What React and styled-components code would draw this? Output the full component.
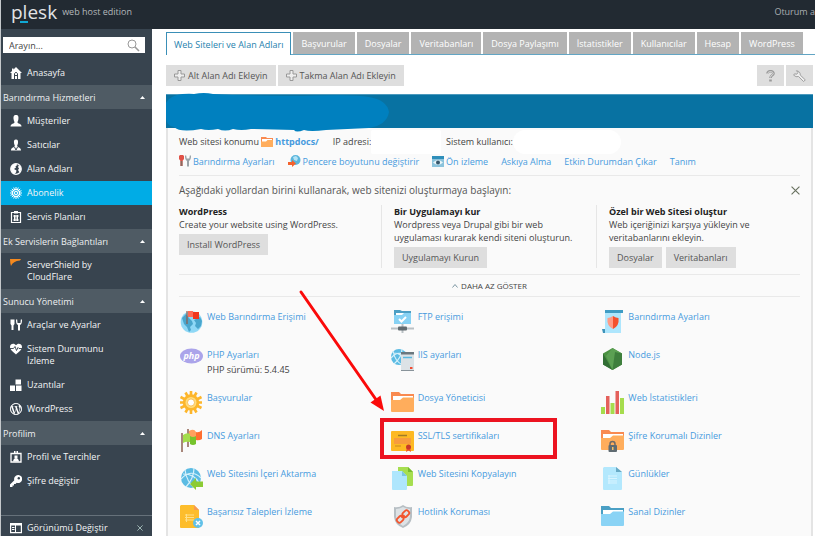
import React from 'react';
import styled, { createGlobalStyle } from 'styled-components';
import { FaWordpressSimple } from 'react-icons/fa';

const GlobalStyle = createGlobalStyle`
  *, *::before, *::after { box-sizing: border-box; }
  body { margin: 0; background: #fff; }
  body, button, input { font-family: "Open Sans", "Noto Sans", sans-serif; font-size: 9px; }
  ul, h1, h2, h3, p { margin: 0; padding: 0; list-style: none; font-weight: 400; }
  button { border: 0; cursor: pointer; }
  svg { display: block; flex: none; }
`;

/* ---------- layout ---------- */
const Page = styled.div`
  min-height: calc(100vh - 2px);
  display: flex;
  flex-direction: column;
  border-left: 1px solid #c4c8cb;
  overflow: hidden;
`;
const Header = styled.header`
  height: 29px;
  background: #222a32;
  display: flex;
  align-items: center;
  justify-content: space-between;
  padding: 0 0 6px 10px;
  color: #a9adb1;
  white-space: nowrap;
`;
const Brand = styled.div`
  display: flex;
  align-items: center;
  gap: 5px;
  color: #b4b8bb;
  font-size: 9px;
`;
const Logo = styled.span`
  position: relative;
  font-size: 19px;
  line-height: 22px;
  color: #e2e4e6;
  &::after {
    content: '';
    position: absolute;
    left: 9px;
    bottom: 0;
    width: 8px;
    height: 2px;
    background: #10a8d4;
  }
`;
const Columns = styled.div`
  flex: 1;
  display: flex;
`;
const Sidebar = styled.aside`
  width: 151px;
  flex: none;
  background: #38444f;
  display: flex;
  flex-direction: column;
  color: #f1f3f4;
`;
const Main = styled.main`
  flex: 1;
  min-width: 0;
  display: flex;
  flex-direction: column;
  padding: 3px 2px 0 14px;
`;

/* ---------- sidebar ---------- */
const Search = styled.label`
  margin: 8px 7px 8px 2px;
  height: 16px;
  background: #fff;
  display: flex;
  align-items: center;
  padding: 0 5px 0 6px;
  input {
    flex: 1;
    min-width: 0;
    border: 0;
    outline: 0;
    padding: 0;
    background: none;
    color: #333;
  }
  input::placeholder { color: #444; opacity: 1; }
`;
const GroupHead = styled.button`
  width: 100%;
  height: 24px;
  display: flex;
  align-items: center;
  justify-content: space-between;
  padding: 0 7px 0 2px;
  background: #4f5b64;
  color: #eef0f1;
`;
const NavLink = styled.a`
  display: flex;
  gap: 5px;
  padding: 6px 24px 6px 9px;
  line-height: 12px;
  text-decoration: none;
  color: #f4f5f6;
  background: ${(p) => (p.$active ? '#00ace6' : 'transparent')};
`;
const ViewSwitch = styled.div`
  margin-top: auto;
  height: 21px;
  border-top: 1px solid #66717a;
  display: flex;
  align-items: center;
  justify-content: space-between;
  padding: 3px 9px 0 9px;
  button {
    display: flex;
    align-items: center;
    gap: 5px;
    padding: 0;
    background: none;
    color: #f4f5f6;
  }
`;

/* ---------- main ---------- */
const Tabs = styled.div`
  display: flex;
  gap: 2px;
  border-bottom: 1px solid #62a5c4;
  margin-right: -2px;
`;
const Tab = styled.button`
  height: ${(p) => (p.$active ? 23 : 22)}px;
  margin-bottom: ${(p) => (p.$active ? -1 : 0)}px;
  padding: 0 ${(p) => (p.$active ? 7 : 8)}px;
  white-space: nowrap;
  color: ${(p) => (p.$active ? '#2681ad' : '#fff')};
  background: ${(p) => (p.$active ? '#fff' : '#b3b3b3')};
  border: ${(p) => (p.$active ? '1px solid #3a8fb7' : '0')};
  border-bottom: 0;
`;
const Toolbar = styled.div`
  display: flex;
  gap: 2px;
  margin: 10px 0 8px;
`;
const Spacer = styled.span`
  flex: 1;
`;
const Button = styled.button`
  height: 21px;
  padding: 0 8px;
  display: flex;
  align-items: center;
  gap: 3px;
  background: #dedede;
  color: #555;
  white-space: nowrap;
`;
const ToolIconButton = styled(Button)`
  width: 27px;
  padding: 0;
  justify-content: center;
`;
const Panel = styled.section`
  flex: 1;
  display: flex;
  flex-direction: column;
`;
const PanelHead = styled.div`
  position: relative;
  height: 34px;
  background: #0872a2;
  border-top: 1px solid #4b99bd;
  svg {
    position: absolute;
    left: 0;
    top: -2px;
  }
`;
const PanelBody = styled.div`
  flex: 1;
  background: #fafafa;
  border: 1px solid #e4e4e4;
  border-width: 0 2px;
  padding: 0 11px 4px;
`;
const InfoRow = styled.div`
  height: 27px;
  display: flex;
  align-items: center;
  white-space: nowrap;
  color: #444;
`;
const Redacted = styled.span`
  height: 24px;
  width: ${(p) => p.$width}px;
  border-radius: ${(p) => p.$radius}px;
  background: #fff;
`;
const Link = styled.a`
  display: flex;
  align-items: center;
  gap: 2px;
  color: #479ade;
  text-decoration: none;
  font-weight: ${(p) => (p.$bold ? 700 : 400)};
`;
const LinkRow = styled.div`
  height: 20px;
  padding-bottom: 8px;
  display: flex;
  align-items: center;
  gap: 13px;
  white-space: nowrap;
`;
const Builder = styled.div`
  border-top: 1px solid #e9e9e9;
  border-bottom: 1px solid #e9e9e9;
  padding: 6px 0;
`;
const BuilderHead = styled.div`
  display: flex;
  justify-content: space-between;
  align-items: center;
  height: 16px;
  h2 { font-size: 10px; color: #555; }
  button { padding: 0; background: none; }
`;
const Cards = styled.div`
  display: grid;
  grid-template-columns: repeat(3, 1fr);
  gap: 24px;
  margin-top: 7px;
`;
const Card = styled.div`
  line-height: 13px;
  color: #444;
  & + & {
    margin-left: -13px;
    padding-left: 12px;
    border-left: 1px solid #e6e6e6;
  }
  h3 { font-size: 9px; font-weight: 700; color: #222; line-height: 13px; }
  p { white-space: pre-line; }
`;
const Actions = styled.div`
  display: flex;
  gap: 4px;
  margin-top: 3px;
`;
const ShowLess = styled.button`
  width: 100%;
  height: 22px;
  display: flex;
  align-items: center;
  justify-content: center;
  gap: 3px;
  background: none;
  border-bottom: 1px solid #e9e9e9;
  color: #444;
  font-size: 8px;
`;
const Services = styled.ul`
  display: grid;
  grid-template-columns: repeat(3, 1fr);
  gap: 14px 12px;
  padding: 13px 0 0 1px;
`;
const Service = styled.li`
  position: relative;
  display: flex;
  gap: 4px;
  min-height: 24px;
  line-height: 14px;
  color: #444;
  white-space: nowrap;
  p { margin-top: 1px; }
`;
const Highlight = styled.span`
  position: absolute;
  left: -11px;
  top: -11px;
  width: 177px;
  height: 41px;
  border: 4px solid #ec1320;
`;
const Arrow = styled.svg`
  position: absolute;
  left: -94px;
  top: -140px;
  pointer-events: none;
`;

/* ---------- sidebar icons ---------- */
const Glyph = ({ children }) => (
  <svg width="12" height="12" viewBox="0 0 12 12" fill="#fff">{children}</svg>
);
const glyphs = {
  home: (
    <Glyph>
      <path d="M6 0 12 6h-1.500v6H1.500V6H0L2 4V1.500h1.500v1z" />
      <path d="M4.500 12V6.500Q6 4 7.500 6.500V12M5 8.500h2" fill="none" stroke="#38444f" />
    </Glyph>
  ),
  user: <Glyph><path d="M6 0C3.500 0 3.300 2 3.600 4.200 3.900 6 4.500 6.500 4.500 7.500 4.500 8.600.5 8.500.5 11.500h11c0-3-4-2.900-4-4 0-1 .6-1.500.9-3.300C8.700 2 8.500 0 6 0z" /></Glyph>,
  reseller: (
    <Glyph>
      <path d="M6 .5C4 .5 3.800 2 4 4c.2 1.500.8 2 .8 3C4.800 8.500 1 8 1 11.500h10C11 8 7.200 8.500 7.200 7c0-1 .6-1.500.8-3 .2-2 0-3.500-2-3.500z" />
      <path d="m4.500 8 1.500 3 1.500-3" fill="none" stroke="#38444f" />
    </Glyph>
  ),
  globe: (
    <Glyph>
      <circle cx="6" cy="6" r="5.300" fill="none" stroke="#fff" strokeWidth="1.200" />
      <path d="M1 6C.8 3 3 .6 6 .8L7.500 2 5.500 3.200 6 4.500 4 6l2.500 1.500L6 9.500 4.500 11C2 10.500 1 8 1 6zM9 2l2 2.500V7L9.500 9.500 8 7l1-1.500L8 4z" />
    </Glyph>
  ),
  gear: (
    <Glyph>
      <path d="M6 0v12M0 6h12M1.800 1.800l8.400 8.400M10.200 1.800l-8.400 8.400M3.700.5l4.600 11M8.300.5l-4.600 11M.5 3.700l11 4.600M.5 8.300l11-4.600" stroke="#fff" strokeWidth="1" />
      <circle cx="6" cy="6" r="4" />
      <circle cx="6" cy="6" r="2.600" fill="none" stroke="#00ace6" strokeWidth=".8" />
      <circle cx="6" cy="6" r="1" fill="#00ace6" />
    </Glyph>
  ),
  plans: (
    <Glyph>
      <path d="M1.500 1.500h9v10h-9z" fill="none" stroke="#fff" strokeWidth="1.200" />
      <path d="M4 0h4v2.500H4zM4 4h1.500v6H4zM6.500 4H8v6H6.500zM3.200 4.500h5.600v1H3.200zM3.200 8.500h5.600v1H3.200z" />
    </Glyph>
  ),
  shield: <Glyph><path d="M0 0h11L10 1.500Q3 2 1 7Q0 4 0 0z" fill="#f58a1f" /></Glyph>,
  tools: <Glyph><path d="M.5.5h4v4.500L3.500 6.500V11h-2V6.500L.5 5zM6 .5c0 3 .2 4.500 2 5.500v5.500h2V6c1.800-1 2-2.500 2-5.500h-1.200L10.500 4h-3L7.200.5z" /></Glyph>,
  heart: (
    <Glyph>
      <path d="M6 2.300C7.500-.3 12 .3 12 4c0 3-3.500 5-6 7.500C3.500 9 0 7 0 4 0 .3 4.500-.3 6 2.300z" />
      <path d="M0 5.500h3.500L5 3.500l1.500 4 1.500-3 1 1h3" fill="none" stroke="#38444f" strokeWidth=".9" />
    </Glyph>
  ),
  blocks: <Glyph><path d="M0 6.500h5V12H0zM6 6.500h5.500V12H6zM5.500.5H11V5.500H5.500z" /></Glyph>,
  wordpress: (
    <Glyph>
      <circle cx="6" cy="6" r="5.500" fill="none" stroke="#fff" strokeWidth=".8" />
      <FaWordpressSimple size={12} color="#fff" />
    </Glyph>
  ),
  profile: (
    <Glyph>
      <path d="M1 2.500h10v8.500H1z" fill="none" stroke="#fff" strokeWidth="1.300" />
      <path d="M4 0h1.500v3H4zM6.500 0H8v3H6.500zM4.500 4.500h3V7h-3zM3 10.500Q3.500 7 6 7t3 3.500z" />
    </Glyph>
  ),
  key: (
    <Glyph>
      <path d="M8 0a4 4 0 1 1-1.300 7.700L5.500 9H4v1.500H2.500V12H0V9.500l4.300-4.300A4 4 0 0 1 8 0z" />
      <circle cx="8.800" cy="3.200" r="1.200" fill="#38444f" />
    </Glyph>
  ),
  view: (
    <Glyph>
      <path d="M.6 1.600h10.800v9H.6z" fill="none" stroke="#fff" strokeWidth="1.200" />
      <path d="M.5 1.500h11v2H.5zM2 5h2.500v1H2zM2 7h2.500v1H2zM5 3h1v7H5z" />
    </Glyph>
  ),
};

/* ---------- service icons ---------- */
const Pic = ({ children, size = 23 }) => (
  <svg width={size} height={size} viewBox="0 0 23 23">{children}</svg>
);
const Web = ({ r = 10, cx = 11, cy = 11 }) => (
  <g fill="none" stroke="#d6f1fb" strokeWidth="1.200">
    <circle cx={cx} cy={cy} r={r} fill="#5bbbe3" stroke="none" />
    <path d={`M${cx - r} ${cy + 1}Q${cx} ${cy - r} ${cx + r} ${cy}M${cx - 6} ${cy - r + 2}Q${cx - 4} ${cy + 5} ${cx + 4} ${cy + r}M${cx + 3} ${cy - r}Q${cx + 3} ${cy} ${cx - 5} ${cy + r - 1}M${cx - r + 2} ${cy - 4}Q${cx + 4} ${cy - 4} ${cx + r - 2} ${cy + 5}`} />
  </g>
);
const Folder = ({ back, front, children }) => (
  <Pic>
    <path d="M0 1h8l2 2h13v10H0z" fill={back} />
    <path d="M2 5h20v6H2z" fill="#fff" />
    <path d="M0 9h9l3-2.500h11V20q0 1-1 1H1q-1 0-1-1z" fill={front} />
    {children}
  </Pic>
);
const pics = {
  access: (
    <Pic>
      <circle cx="11.500" cy="12" r="10.800" fill="#8fd8f6" />
      <path d="M2 8 6 4l3 4 3 3 1 3-3 3 1 3-2 2-2-5-3-3zM14 10l6-3 2 4-1 5-3 3-3-3 1-3z" fill="#4aa6cd" />
      <path d="M7 1v13" stroke="#8d5d4c" strokeWidth="1.200" />
      <path d="M8 1h5v6H8z" fill="#ff6b57" />
      <path d="M13 2h6v7h-6z" fill="#f0371d" />
    </Pic>
  ),
  php: (
    <Pic>
      <ellipse cx="11.500" cy="8" rx="11.500" ry="7.500" fill="#aba4ea" />
      <text x="11.500" y="11" fontSize="9" fontWeight="700" fontStyle="italic" textAnchor="middle" fill="#fff">php</text>
    </Pic>
  ),
  cog: (
    <Pic>
      <path d="M11 0v23M.5 6l21 11M.5 17l21-11M5.500 1.500l11 20M16.500 1.500l-11 20M0 11.500h22" stroke="#fdb62b" strokeWidth="2.600" />
      <circle cx="11" cy="11.500" r="8.300" fill="#fdb62b" />
      <circle cx="11" cy="11.500" r="5.500" fill="#ffdc7e" />
      <circle cx="11" cy="11.500" r="3.500" fill="#fff" stroke="#f5a51e" strokeWidth=".6" />
    </Pic>
  ),
  flags: (
    <Pic>
      <path d="M2 4v19M8 0v18" stroke="#8d6252" strokeWidth="1.500" />
      <path d="M9 2q5-3 7 1v7H9z" fill="#ffa05e" />
      <path d="M16 3q3 1 6-2v9q-3 2-6 1z" fill="#ff6e30" />
      <path d="M3 6q4-3 7-1v8q-4-1-7 1z" fill="#a4dd4b" />
      <path d="M10 7q3 2 6 0v8q-3 2-6 0z" fill="#76c32c" />
    </Pic>
  ),
  importSite: (
    <Pic>
      <Web />
      <path d="m10 17 6-6v3.500h7V20h-7v3z" fill="#8ccb35" />
    </Pic>
  ),
  failed: (
    <Pic>
      <path d="M1 0h13l5 5v18H1Q0 23 0 22V1z" fill="#fdbd2c" />
      <path d="M14 0v5h5z" fill="#f79a54" />
      <path d="M5 10h9M5 12.500h9M5 15h9M6.500 9v8" stroke="#ffe08a" />
      <circle cx="18" cy="18" r="5" fill="#62c1e8" />
      <path d="m16 16 4 4m0-4-4 4" stroke="#fff" strokeWidth="1.500" />
    </Pic>
  ),
  ftp: (
    <Pic>
      <path d="M3 0h6l2 1h9v4H3z" fill="#4d9fc4" />
      <path d="M5 3h14v4H5z" fill="#fff" />
      <path d="M3 5h8l2-2h7v11H3z" fill="#88d2f4" />
      <path d="m8 9 2.500 2.500L15 7" stroke="#fff" strokeWidth="2" fill="none" />
      <path d="M0 18.500h23M11.500 14v9" stroke="#b9c0c4" strokeWidth="2" />
      <rect x="7" y="16.500" width="9" height="4" rx="1" fill="#616b70" />
    </Pic>
  ),
  iis: (
    <Pic>
      <Web cx={8} cy={9} r={8} />
      <path d="M10 4h13v19H10z" fill="#dce2e6" />
      <path d="M10 4h13v2.500H10z" fill="#6b777e" />
      <path d="M12 9.500h9" stroke="#5ab8e0" strokeWidth="1.500" />
      <path d="M10 22.500h13" stroke="#88939a" />
      <path d="M19 19h2.500v2H19z" fill="#f04c32" />
    </Pic>
  ),
  folder: <Folder back="#f98a50" front="#ffad5c" />,
  cert: (
    <Pic>
      <rect y="2" width="23" height="20" rx="1" fill="#fdb924" />
      <path d="M7 6.500h9" stroke="#a17c27" strokeWidth="1.500" />
      <path d="M3 9h17v6H3z" fill="#f79c3e" />
      <path d="M4 17h6" stroke="#c78a20" />
      <path d="m16 18-1 5 2.500-1.500L20 23l-1-5z" fill="#f0542c" />
      <circle cx="17.500" cy="18" r="2.500" fill="#c8382a" />
    </Pic>
  ),
  copy: (
    <Pic>
      <path d="M7 0h10l5 5v13q0 1-1 1H7z" fill="#a6de50" />
      <path d="M17 0v5h5z" fill="#76bb30" />
      <path d="M1 4h10l5 5v13q0 1-1 1H2q-1 0-1-1z" fill="#aee6fd" />
      <path d="M11 4v5h5z" fill="#7cc5e2" />
    </Pic>
  ),
  hotlink: (
    <Pic>
      <path d="M12 0q4 3 9 2v10q-1 8-9 11-8-3-9-11V2q5 1 9-2z" fill="#b7bfc4" />
      <path d="M12 2q4 2 7 2v8q-1 6-7 9-6-3-7-9V4q3 0 7-2z" fill="#dde2e5" />
      <g fill="none" stroke="#f2562f" strokeWidth="1.800" transform="rotate(-45 12 11.500)">
        <rect x="4.500" y="9" width="7" height="5" rx="2" />
        <rect x="12.500" y="9" width="7" height="5" rx="2" />
        <path d="M10 11.500h4" />
      </g>
    </Pic>
  ),
  hosting: (
    <Pic>
      <path d="M4 3h16v20H2v-4h2z" fill="#aee6fd" />
      <path d="M4 0h18v3H4z" fill="#3f9cc4" />
      <path d="M1 19h3v4H2z" fill="#3d93b9" />
      <path d="M12 6q3 2 5.500 2 1 8-5.500 11z" fill="#f4502d" />
      <path d="M12 6Q9 8 6.500 8q-1 8 5.500 11z" fill="#ff9a86" />
    </Pic>
  ),
  node: (
    <Pic>
      <path d="m11.500 0 9.500 5.500v11L11.500 22 2 16.500v-11z" fill="#4b9142" />
      <path d="m2 5.500 9.500 16.500L2 16.500z" fill="#326e35" />
      <path d="M11.500 0 21 5.500 11.500 22 5 8z" fill="#5ba053" />
      <path d="m14 4 7 1.500v11L11.500 22z" fill="#3e7f3d" />
    </Pic>
  ),
  stats: (
    <Pic>
      <path d="M0 16h4v7H0zM9.500 12h4v11h-4zM19 7h4v16h-4z" fill="#a6dc4d" />
      <path d="M5 5h3.500v18H5zM14.500 0H18v23h-3.500z" fill="#e4605b" />
    </Pic>
  ),
  locked: (
    <Folder back="#f98a50" front="#ffad5c">
      <path d="M9 17v-2q0-2.500 2.500-2.500T14 15v2" fill="none" stroke="#6f6a66" strokeWidth="1.500" />
      <rect x="7.500" y="16" width="8.500" height="7" rx="1" fill="#5f6b72" />
      <path d="M11 18h1.500v3H11z" fill="#f5c066" />
    </Folder>
  ),
  logs: (
    <Pic>
      <path d="M3 0h12l6 5v17q0 1-1 1H3q-1 0-1-1V1z" fill="#b3e8fd" />
      <path d="M15 0v5h6z" fill="#68a9c4" />
      <path d="M7 9h9M7 11.500h9M7 14h9M7 16h9M8 8v9" stroke="#d8f4ff" />
    </Pic>
  ),
  blueFolder: <Folder back="#4a9fc4" front="#8ad3f5" />,
};

/* ---------- small icons ---------- */
const SearchIcon = () => (
  <svg width="13" height="13" viewBox="0 0 13 13" fill="none" stroke="#999">
    <circle cx="5" cy="5" r="4" />
    <path d="m8 8 4 4" strokeWidth="1.600" />
  </svg>
);
const PlusIcon = () => (
  <svg width="11" height="11" viewBox="0 0 11 11" fill="#eee" stroke="#999">
    <path d="M4 .5h3V4h3.500v3H7v3.500H4V7H.5V4H4z" />
  </svg>
);
const UpIcon = () => (
  <svg width="5" height="3" viewBox="0 0 5 3"><path d="M0 3 2.500 0 5 3z" fill="#fff" /></svg>
);
const Cross = ({ size, color }) => (
  <svg width={size} height={size} viewBox="0 0 8 8" stroke={color}><path d="m.5.500 7 7m0-7-7 7" /></svg>
);

const groups = [
  { items: [['home', 'Anasayfa']] },
  {
    title: 'Barındırma Hizmetleri',
    items: [['user', 'Müşteriler'], ['reseller', 'Satıcılar'], ['globe', 'Alan Adları'], ['gear', 'Abonelik'], ['plans', 'Servis Planları']],
  },
  { title: 'Ek Servislerin Bağlantıları', items: [['shield', 'ServerShield by CloudFlare']] },
  {
    title: 'Sunucu Yönetimi',
    items: [['tools', 'Araçlar ve Ayarlar'], ['heart', 'Sistem Durumunu İzleme'], ['blocks', 'Uzantılar'], ['wordpress', 'WordPress']],
  },
  { title: 'Profilim', items: [['profile', 'Profil ve Tercihler'], ['key', 'Şifre değiştir']] },
];
const tabs = ['Web Siteleri ve Alan Adları', 'Başvurular', 'Dosyalar', 'Veritabanları', 'Dosya Paylaşımı', 'İstatistikler', 'Kullanıcılar', 'Hesap', 'WordPress'];
const services = [
  ['access', 'Web Barındırma Erişimi'], ['ftp', 'FTP erişimi'], ['hosting', 'Barındırma Ayarları'],
  ['php', 'PHP Ayarları', 'PHP sürümü: 5.4.45'], ['iis', 'IIS ayarları'], ['node', 'Node.js'],
  ['cog', 'Başvurular'], ['folder', 'Dosya Yöneticisi'], ['stats', 'Web İstatistikleri'],
  ['flags', 'DNS Ayarları'], ['cert', 'SSL/TLS sertifikaları'], ['locked', 'Şifre Korumalı Dizinler'],
  ['importSite', 'Web Sitesini İçeri Aktarma'], ['copy', 'Web Sitesini Kopyalayın'], ['logs', 'Günlükler'],
  ['failed', 'Başarısız Talepleri İzleme'], ['hotlink', 'Hotlink Koruması'], ['blueFolder', 'Sanal Dizinler'],
];

export default function App() {
  return (
    <Page>
      <GlobalStyle />
      <Header>
        <Brand><Logo>plesk</Logo>web host edition</Brand>
        <span>Oturum a</span>
      </Header>
      <Columns>
        <Sidebar>
          <Search>
            <input type="text" placeholder="Arayın..." aria-label="Arayın" />
            <SearchIcon />
          </Search>
          <nav>
            {groups.map((g, i) => (
              <div key={i}>
                {g.title && <GroupHead>{g.title}<UpIcon /></GroupHead>}
                <ul>
                  {g.items.map(([icon, label]) => (
                    <li key={label}>
                      <NavLink href="#" $active={label === 'Abonelik'}>{glyphs[icon]}<span>{label}</span></NavLink>
                    </li>
                  ))}
                </ul>
              </div>
            ))}
          </nav>
          <ViewSwitch>
            <button>{glyphs.view}Görünümü Değiştir</button>
            <button aria-label="Kapat"><Cross size={6} color="#bcd8d2" /></button>
          </ViewSwitch>
        </Sidebar>

        <Main>
          <Tabs role="tablist">
            {tabs.map((t, i) => <Tab key={t} role="tab" aria-selected={i === 0} $active={i === 0}>{t}</Tab>)}
          </Tabs>
          <Toolbar>
            <Button><PlusIcon />Alt Alan Adı Ekleyin</Button>
            <Button><PlusIcon />Takma Alan Adı Ekleyin</Button>
            <Spacer />
            <ToolIconButton aria-label="Yardım">
              <svg width="9" height="12" viewBox="0 0 9 12" fill="none">
                <path d="M1.500 3.500C1.500.5 7.500.5 7.500 3.500 7.500 5.500 4.500 5 4.500 8M4.500 9.500v2" stroke="#999" strokeWidth="2.600" />
                <path d="M1.800 3.500C2 1 7 1 7.200 3.500 7.200 5.300 4.500 5 4.500 7.500" stroke="#e5e5e5" strokeWidth=".9" />
              </svg>
            </ToolIconButton>
            <ToolIconButton aria-label="Ayarlar">
              <svg width="13" height="12" viewBox="0 0 13 12" fill="#eee" stroke="#999" strokeWidth=".9">
                <path d="M3.500.700 5 2.500 3.800 4.200 1.500 3.800.7 5.200Q3 7.500 5.500 6.500l5 5 1.800-1.600L7.200 5Q7.500 1.500 3.500.700z" />
              </svg>
            </ToolIconButton>
          </Toolbar>

          <Panel>
            <PanelHead>
              <svg width="228" height="39" viewBox="0 0 228 39" fill="#0080bf">
                <path d="M3 6Q10 0 28 1q10-2 19 0 30 2 90 2 50-2 66 1 18 3 20 15-2 13-20 16l-43 2q-16 2-22 0-8 3-10 0l-43-1q-10 2-18 0-8 3-15 0-10 2-17 0Q14 40 8 34q-8-1-8-10V10z" />
              </svg>
            </PanelHead>
            <PanelBody>
              <InfoRow>
                <span>Web sitesi konumu&nbsp;</span>
                <Link href="#" $bold>
                  <svg width="12" height="10" viewBox="0 0 12 10">
                    <path d="M0 0h5l1 1h6v9H0z" fill="#f98a50" />
                    <path d="M1 2h10v3H1z" fill="#fff" />
                    <path d="M0 4.500h5L6.500 3H12v7H0z" fill="#ffad5c" />
                  </svg>
                  httpdocs/
                </Link>
                <span>&nbsp;&nbsp;&nbsp;&nbsp;&nbsp;&nbsp;IP adresi:</span>
                <Redacted $width={70} $radius={2} />
                <span>&nbsp;&nbsp;Sistem kullanıcı:</span>
                <Redacted $width={108} $radius={12} />
              </InfoRow>
              <LinkRow>
                <Link href="#">
                  <svg width="12" height="12" viewBox="0 0 12 12">
                    <path d="M1 0h3l1 1v3L3.500 6v5h-2V6L0 4V1z" fill="#e05248" />
                    <path d="M1.500 6h2v5h-2z" fill="#8b6a60" />
                    <path d="M6 .5c0 3 .2 4 2 5.500v5.500h2V6c1.800-1.500 2-2.500 2-5.500h-1.200l-.5 3h-2.600l-.5-3z" fill="#9aa3a8" />
                  </svg>
                  Barındırma Ayarları
                </Link>
                <Link href="#">
                  <svg width="13" height="12" viewBox="0 0 13 12">
                    <circle cx="7.500" cy="5" r="5" fill="#5bb6dc" />
                    <path d="M5 2l3-1 2 2-1 3-3-1z" fill="#b5e3f5" />
                    <path d="M0 7h4V5l4 3.500L4 12v-2H0z" fill="#f4622d" />
                  </svg>
                  Pencere boyutunu değiştirir
                </Link>
                <Link href="#">
                  <svg width="12" height="11" viewBox="0 0 12 11">
                    <path d="M0 0h12v11H0z" fill="#8bc3dc" />
                    <path d="M0 0h12v3H0z" fill="#2f8fba" />
                    <path d="M1 6.500Q6 1.500 11 6.500 6 11 1 6.500z" fill="#e8f4f8" />
                    <circle cx="6" cy="6.500" r="2" fill="#36566a" />
                  </svg>
                  Ön izleme
                </Link>
                <Link href="#">Askıya Alma</Link>
                <Link href="#">Etkin Durumdan Çıkar</Link>
                <Link href="#">Tanım</Link>
              </LinkRow>

              <Builder>
                <BuilderHead>
                  <h2>Aşağıdaki yollardan birini kullanarak, web sitenizi oluşturmaya başlayın:</h2>
                  <button aria-label="Kapat"><Cross size={9} color="#68715f" /></button>
                </BuilderHead>
                <Cards>
                  <Card>
                    <h3>WordPress</h3>
                    <p>Create your website using WordPress.</p>
                    <Actions><Button>Install WordPress</Button></Actions>
                  </Card>
                  <Card>
                    <h3>Bir Uygulamayı kur</h3>
                    <p>{'Wordpress veya Drupal gibi bir web\nuygulaması kurarak kendi siteni oluşturun.'}</p>
                    <Actions><Button>Uygulamayı Kurun</Button></Actions>
                  </Card>
                  <Card>
                    <h3>Özel bir Web Sitesi oluştur</h3>
                    <p>{'Web içeriğinizi karşıya yükleyin ve\nveritabanlarını ekleyin.'}</p>
                    <Actions><Button>Dosyalar</Button><Button>Veritabanları</Button></Actions>
                  </Card>
                </Cards>
              </Builder>
              <ShowLess>
                <svg width="6" height="4" viewBox="0 0 6 4" fill="none" stroke="#7c97a3"><path d="m.5 3.500 2.500-3 2.500 3" /></svg>
                DAHA AZ GÖSTER
              </ShowLess>

              <Services>
                {services.map(([icon, label, note]) => (
                  <Service key={label}>
                    {pics[icon]}
                    <div>
                      <Link href="#">{label}</Link>
                      {note && <p>{note}</p>}
                    </div>
                    {icon === 'cert' && (
                      <>
                        <Highlight />
                        <Arrow width="90" height="124" viewBox="0 0 90 124">
                          <path d="M4 3 80 112" stroke="#fb0a0a" strokeWidth="3" strokeLinecap="round" />
                          <path d="m87 122-13.500-8.500 10-7z" fill="#fb0a0a" />
                        </Arrow>
                      </>
                    )}
                  </Service>
                ))}
              </Services>
            </PanelBody>
          </Panel>
        </Main>
      </Columns>
    </Page>
  );
}
